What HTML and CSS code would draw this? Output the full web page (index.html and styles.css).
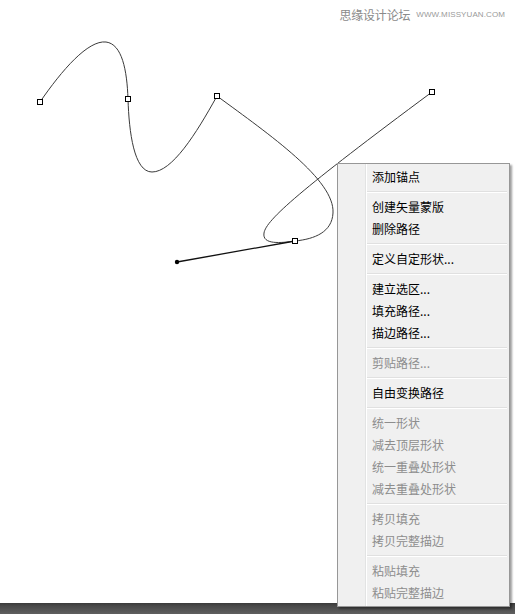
FILE: index.html
```html
<!DOCTYPE html>
<html lang="zh">
<head>
<meta charset="utf-8">
<title>路径右键菜单</title>
<link rel="stylesheet" href="styles.css">
</head>
<body>
<div class="screen">
  <div class="canvas">
    <svg class="paths" width="515" height="603" viewBox="0 0 515 603" xmlns="http://www.w3.org/2000/svg">
      <g fill="none" stroke="#3a3a3a" stroke-width="1">
        <path d="M40,102 C62,70 88,40 106,42 C122,44 127,70 128,99 C129,132 134,172 152,172 C172,172 196,134 217,96"/>
        <path d="M217,96 C270,135 335,180 333,213 C332,232 315,239 295,241"/>
        <path d="M295,241 C281,243 262,245 264,233 C266,220 300,190 432,92"/>
      </g>
      <line x1="177" y1="262" x2="295" y2="241" stroke="#111" stroke-width="1.3"/>
      <circle cx="177" cy="262" r="2.2" fill="#000"/>
      <g fill="#fff" stroke="#000" stroke-width="1">
        <rect x="37.5" y="99.5" width="5" height="5"/>
        <rect x="125.5" y="96.5" width="5" height="5"/>
        <rect x="214.5" y="93.5" width="5" height="5"/>
        <rect x="429.5" y="89.5" width="5" height="5"/>
        <rect x="292.5" y="238.5" width="5" height="5"/>
      </g>
    </svg>
    <div class="watermark"><span class="wm-cn">思缘设计论坛</span><span class="wm-en">WWW.MISSYUAN.COM</span></div>
  </div>
  <div class="statusbar"></div>

  <ul class="menu">
    <li class="item">添加锚点</li>
    <li class="sep"></li>
    <li class="item">创建矢量蒙版</li>
    <li class="item">删除路径</li>
    <li class="sep"></li>
    <li class="item">定义自定形状...</li>
    <li class="sep"></li>
    <li class="item">建立选区...</li>
    <li class="item">填充路径...</li>
    <li class="item">描边路径...</li>
    <li class="sep"></li>
    <li class="item disabled">剪贴路径...</li>
    <li class="sep"></li>
    <li class="item">自由变换路径</li>
    <li class="sep"></li>
    <li class="item disabled">统一形状</li>
    <li class="item disabled">减去顶层形状</li>
    <li class="item disabled">统一重叠处形状</li>
    <li class="item disabled">减去重叠处形状</li>
    <li class="sep"></li>
    <li class="item disabled">拷贝填充</li>
    <li class="item disabled">拷贝完整描边</li>
    <li class="sep"></li>
    <li class="item disabled">粘贴填充</li>
    <li class="item disabled">粘贴完整描边</li>
  </ul>
</div>
</body>
</html>
```

FILE: styles.css
```css
html, body {
  margin: 0;
  padding: 0;
  background: #fff;
}

.screen {
  position: relative;
  width: 515px;
  height: 614px;
  overflow: hidden;
  display: flex;
  flex-direction: column;
  font-family: "Noto Sans CJK SC", "Liberation Sans", sans-serif;
}

.canvas {
  position: relative;
  flex: 1;
  background: #fff;
}

.paths {
  display: block;
}

.watermark {
  position: absolute;
  top: 6px;
  right: 10px;
  display: flex;
  align-items: center;
  gap: 6px;
  color: #8a8a8a;
}

.wm-cn {
  font-size: 12px;
  line-height: 18px;
  letter-spacing: -0.2px;
}

.wm-en {
  font-family: "Liberation Sans", sans-serif;
  font-size: 8px;
  line-height: 18px;
  color: #9a9a9a;
  letter-spacing: 0.1px;
}

.statusbar {
  height: 11px;
  background: linear-gradient(#3b3b3b, #4a4a4a 30%, #5f5f5f);
}

.menu {
  position: absolute;
  left: 337px;
  top: 163px;
  width: 167px;
  margin: 0;
  padding: 2px;
  list-style: none;
  border: 1px solid #979797;
  background:
    linear-gradient(to right, transparent 27px, #e2e3e3 27px, #e2e3e3 28px, #fff 28px, #fff 29px, transparent 29px),
    #f0f0f0;
  box-shadow: 2px 2px 2px rgba(0, 0, 0, 0.38);
}

.item {
  height: 22px;
  line-height: 22px;
  padding-left: 32px;
  font-size: 12px;
  color: #000;
  white-space: nowrap;
}

.item.disabled {
  color: #8d8d8d;
}

.sep {
  height: 8px;
  display: flex;
  flex-direction: column;
  justify-content: center;
  padding-left: 27px;
}

.sep::before {
  content: "";
  display: block;
  height: 1px;
  background: #e0e0e0;
  border-bottom: 1px solid #fff;
}
```
